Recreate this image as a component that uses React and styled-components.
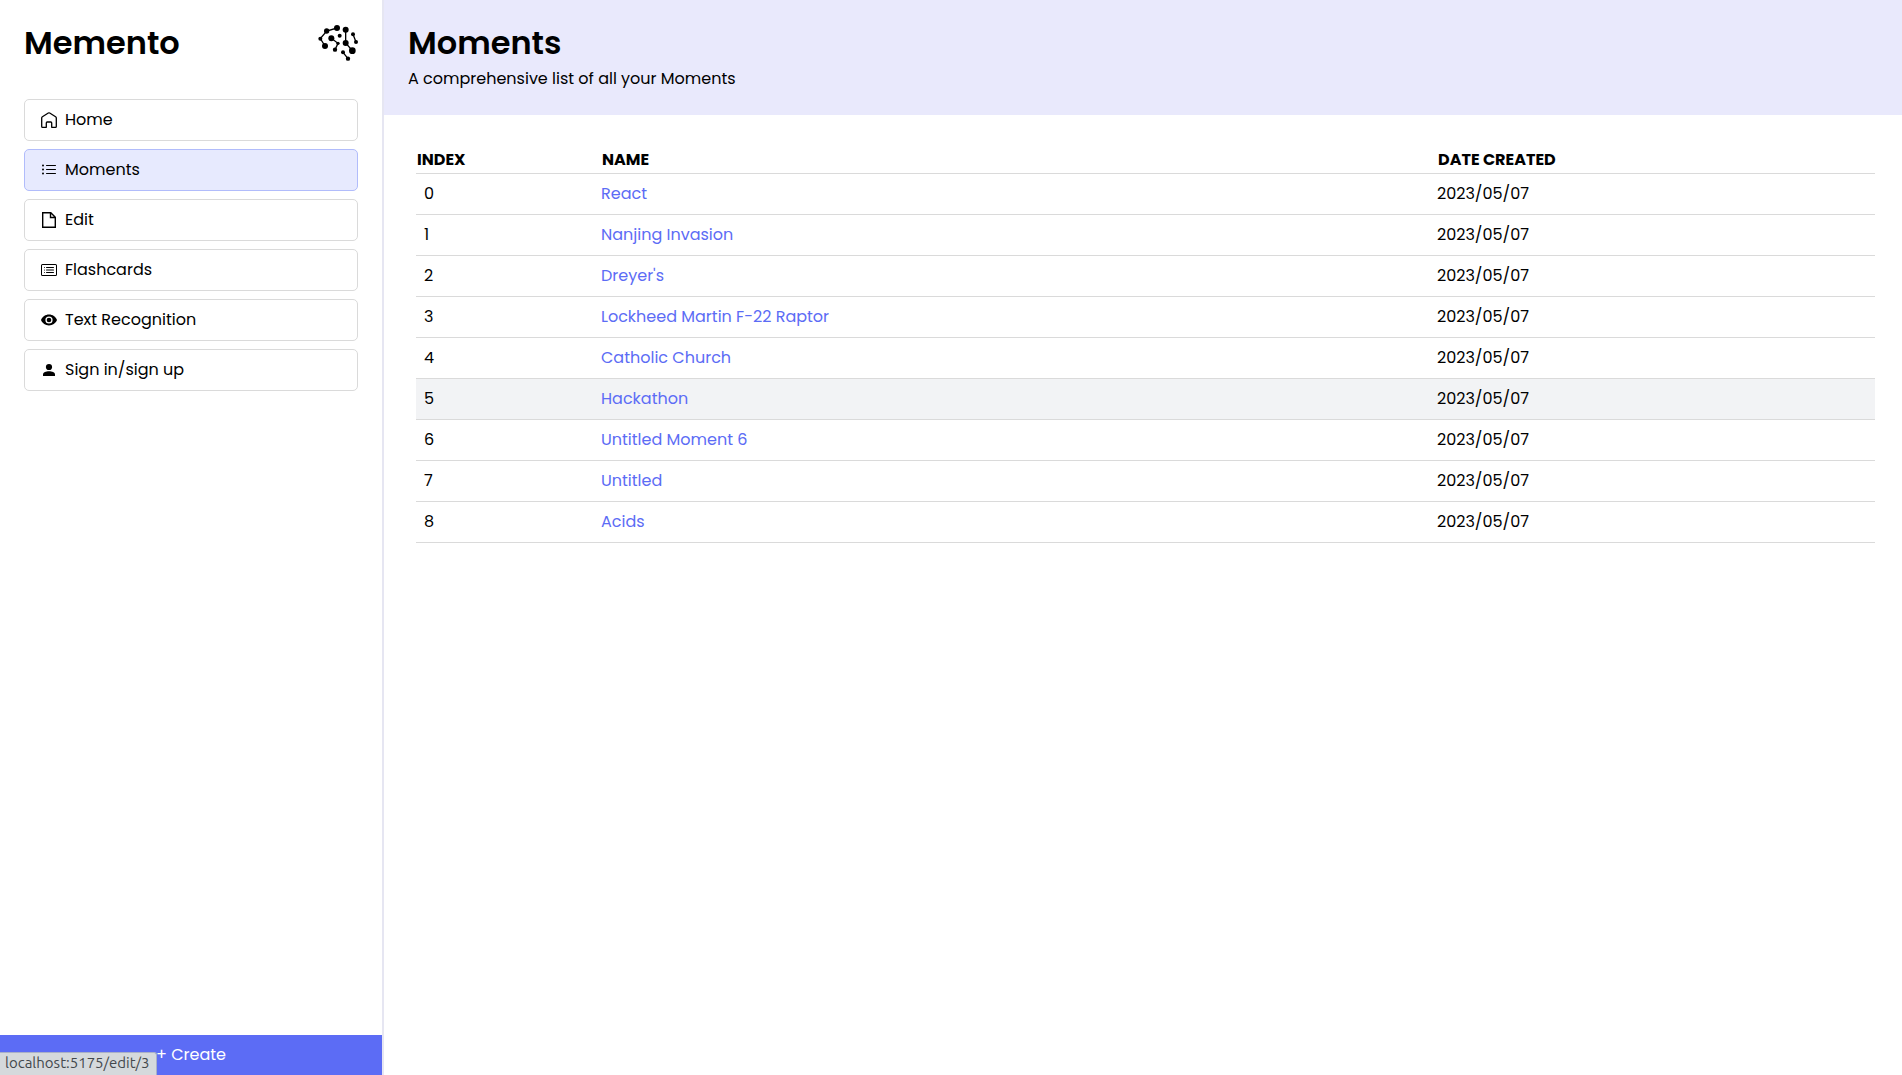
import React from "react";
import styled, { createGlobalStyle } from "styled-components";
import { BsCardList, BsListUl } from "react-icons/bs";

const GlobalStyle = createGlobalStyle`
  *, *::before, *::after { box-sizing: border-box; }
  body {
    margin: 0;
    background: #fff;
    color: #000;
    font-family: Poppins, Inter, "Open Sans", sans-serif;
    font-size: 16px;
    line-height: 24px;
  }
  a { color: inherit; text-decoration: none; }
`;

const Layout = styled.div`
  display: flex;
  min-height: 100vh;
`;

const Sidebar = styled.aside`
  position: sticky;
  top: 0;
  display: flex;
  flex-direction: column;
  flex: 0 0 384px;
  height: 100vh;
  border-right: 2px solid #e6e6f2;
`;

const SidebarBody = styled.div`
  display: flex;
  flex: 1;
  flex-direction: column;
  gap: 38px;
  padding: 24px;
`;

const Brand = styled.div`
  display: flex;
  align-items: center;
  justify-content: space-between;
`;

const Title = styled.h1`
  margin: 0;
  font-size: 32px;
  font-weight: 600;
  line-height: 37px;
`;

const Nav = styled.nav`
  display: flex;
  flex-direction: column;
  gap: 8px;
`;

const NavLink = styled.a`
  display: flex;
  align-items: center;
  gap: 8px;
  padding: 8px 16px;
  border: 1px solid ${(p) => (p.$active ? "#b1bcfb" : "#dadada")};
  border-radius: 5px;
  background: ${(p) => (p.$active ? "#e7eafe" : "#fff")};
`;

const CreateButton = styled.button`
  height: 40px;
  border: 0;
  background: #5c6cf5;
  color: #fff;
  font: inherit;
  cursor: pointer;
`;

const Main = styled.main`
  flex: 1;
  min-width: 0;
`;

const PageHeader = styled.header`
  display: flex;
  flex-direction: column;
  gap: 6px;
  padding: 24px;
  background: #e9e9fc;
`;

const Subtitle = styled.p`
  margin: 0;
`;

const TableArea = styled.section`
  padding: 32px 27px 32px 32px;
`;

const Table = styled.table`
  width: 100%;
  table-layout: fixed;
  border-spacing: 0;
`;

const Column = styled.col`
  width: ${(p) => p.$width};
`;

const HeadCell = styled.th`
  padding: 1px;
  border-bottom: 1px solid #dadada;
  font-weight: 700;
  text-align: left;
  text-transform: uppercase;
`;

const Row = styled.tr`
  background: ${(p) => (p.$hovered ? "#f2f3f5" : "transparent")};
`;

const Cell = styled.td`
  padding: 8px 0;
  padding-left: ${(p) => (p.$inset ? "8px" : "0")};
  border-bottom: 1px solid #dadada;
`;

const MomentLink = styled.a`
  && { color: #5c6cf5; }
`;

const StatusBubble = styled.div`
  position: fixed;
  bottom: 0;
  left: 0;
  height: 23px;
  padding: 0 5px;
  border-top: 1px solid #a9b0c8;
  border-right: 1px solid #a9b0c8;
  border-top-right-radius: 3px;
  min-width: 157px;
  background: #d5d9dc;
  color: #43484c;
  font-family: Ubuntu, "Noto Sans", sans-serif;
  font-size: 15px;
  line-height: 20px;
  white-space: nowrap;
`;

const Icon = (props) => (
  <svg width="16" height="16" viewBox="0 0 16 16" aria-hidden="true" {...props} />
);

const HomeIcon = () => (
  <Icon fill="none" stroke="currentColor" strokeWidth="1.3" strokeLinejoin="round">
    <path d="M7.3 1 1.4 4.7Q.7 5.2.7 6v8.4q0 .9.9.9h3.7v-4.4q0-.9.9-.9h3.6q.9 0 .9.9v4.4h3.7q.9 0 .9-.9V6q0-.8-.7-1.3L8.7 1Q8 .6 7.3 1Z" />
  </Icon>
);

const FileIcon = () => (
  <Icon fill="none" stroke="currentColor" strokeWidth="1.4">
    <path d="M1.7.7h8.1l4.5 4.5v10.1H1.7ZM9.5.7v4.8h4.8" />
  </Icon>
);

const EyeIcon = () => (
  <Icon fill="currentColor">
    <path
      fillRule="evenodd"
      d="M8 2.6C4.4 2.6 1.3 4.8 0 8c1.3 3.2 4.4 5.4 8 5.4s6.7-2.2 8-5.4c-1.3-3.2-4.4-5.4-8-5.4Zm0 9a3.6 3.6 0 1 1 0-7.2 3.6 3.6 0 0 1 0 7.2Z"
    />
    <circle cx="8" cy="8" r="2.3" />
  </Icon>
);

const PersonIcon = () => (
  <Icon fill="currentColor">
    <circle cx="8" cy="5" r="3.1" />
    <path d="M2 14v-1.5C2 10.3 5 9.2 8 9.2s6 1.1 6 3.3V14Z" />
  </Icon>
);

const logoNodes = [
  [61, 86, 6], [80, 63, 8], [111, 54, 9], [75, 108, 9],
  [137, 59, 9], [137, 99, 9], [157, 122, 10], [119, 77, 6],
  [94, 85, 9], [114, 100, 5], [105, 119, 6.5],
  [159, 73, 6], [168, 96, 6], [129, 127, 6], [144, 146, 6.5],
];

const Logo = () => (
  <svg width="40" height="36" viewBox="54 45 120 108" role="img" aria-label="Memento logo">
    <path
      d="M75 108 61 86 80 63 111 54M137 59V99L157 122M94 85 114 100 105 119M159 73 168 96M129 127 144 146"
      fill="none"
      stroke="#000"
      strokeWidth="4"
    />
    {logoNodes.map(([x, y, r]) => (
      <circle key={`${x}-${y}`} cx={x} cy={y} r={r} />
    ))}
  </svg>
);

const navItems = [
  { label: "Home", icon: HomeIcon },
  { label: "Moments", icon: BsListUl, active: true },
  { label: "Edit", icon: FileIcon },
  { label: "Flashcards", icon: BsCardList },
  { label: "Text Recognition", icon: EyeIcon },
  { label: "Sign in/sign up", icon: PersonIcon },
];

const moments = [
  "React",
  "Nanjing Invasion",
  "Dreyer's",
  "Lockheed Martin F-22 Raptor",
  "Catholic Church",
  "Hackathon",
  "Untitled Moment 6",
  "Untitled",
  "Acids",
];

export default function App() {
  return (
    <>
      <GlobalStyle />
      <Layout>
        <Sidebar>
          <SidebarBody>
            <Brand>
              <Title as="div">Memento</Title>
              <Logo />
            </Brand>
            <Nav>
              {navItems.map(({ label, icon: ItemIcon, active }) => (
                <NavLink key={label} href="#" $active={active} aria-current={active ? "page" : undefined}>
                  <ItemIcon />
                  {label}
                </NavLink>
              ))}
            </Nav>
          </SidebarBody>
          <CreateButton type="button">+ Create</CreateButton>
        </Sidebar>
        <Main>
          <PageHeader>
            <Title>Moments</Title>
            <Subtitle>A comprehensive list of all your Moments</Subtitle>
          </PageHeader>
          <TableArea>
            <Table>
              <colgroup>
                <Column $width="185px" />
                <Column $width="auto" />
                <Column $width="438px" />
              </colgroup>
              <thead>
                <tr>
                  <HeadCell scope="col">Index</HeadCell>
                  <HeadCell scope="col">Name</HeadCell>
                  <HeadCell scope="col">Date Created</HeadCell>
                </tr>
              </thead>
              <tbody>
                {moments.map((name, index) => (
                  <Row key={name} $hovered={index === 5}>
                    <Cell $inset>{index}</Cell>
                    <Cell>
                      <MomentLink href={`#edit/${index}`}>{name}</MomentLink>
                    </Cell>
                    <Cell>2023/05/07</Cell>
                  </Row>
                ))}
              </tbody>
            </Table>
          </TableArea>
        </Main>
      </Layout>
      <StatusBubble>localhost:5175/edit/3</StatusBubble>
    </>
  );
}
